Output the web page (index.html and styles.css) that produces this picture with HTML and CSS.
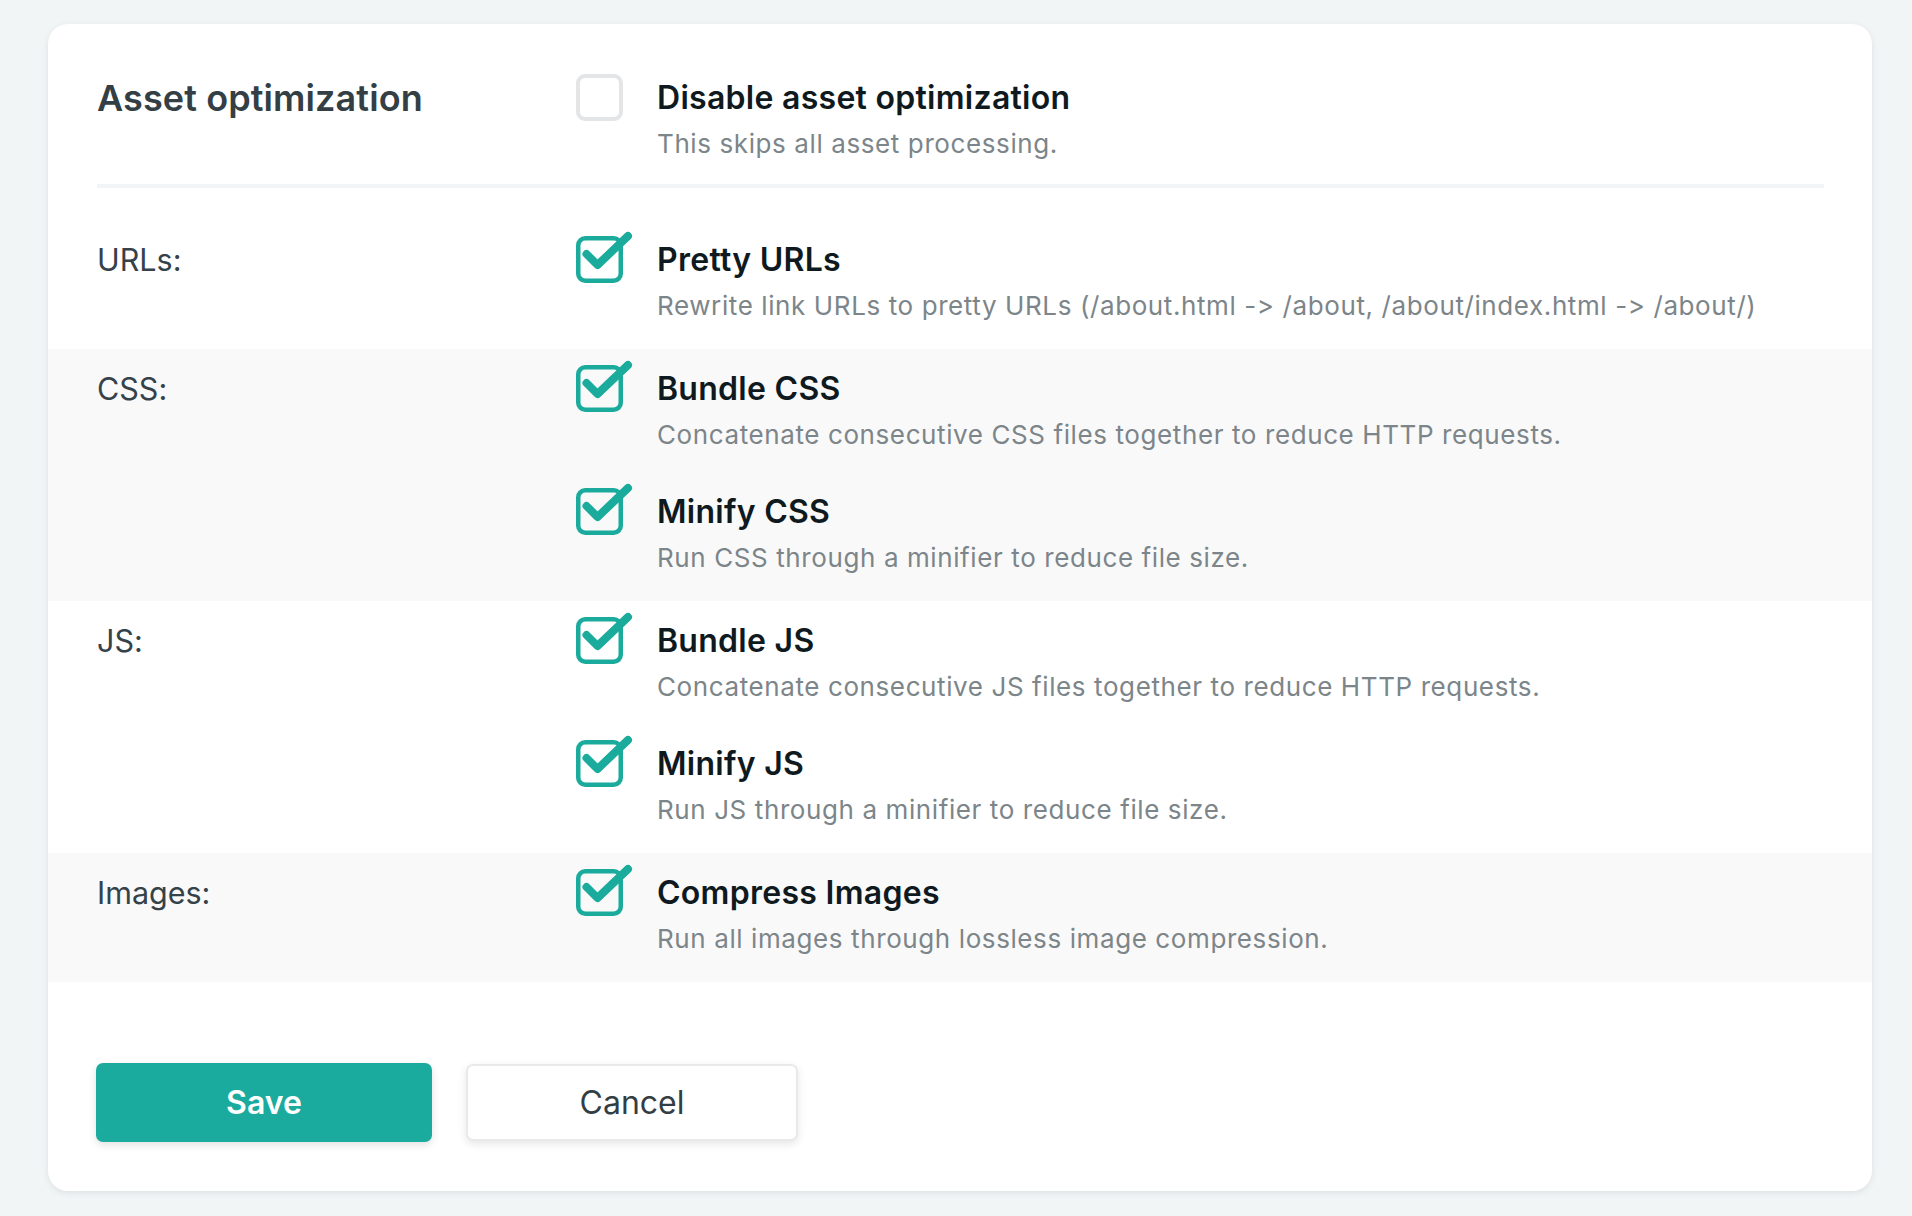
FILE: index.html
```html
<!DOCTYPE html>
<html lang="en">
<head>
<meta charset="utf-8">
<title>Asset optimization</title>
<link rel="stylesheet" href="styles.css">
</head>
<body>
<div class="card">
  <div class="header">
    <h2 class="title">Asset optimization</h2>
    <div class="option">
      <svg class="cb" viewBox="0 0 47 47" aria-hidden="true"><rect class="cb-off" x="2" y="2" width="43" height="43" rx="7"/></svg>
      <div class="opt-text">
        <div class="opt-label">Disable asset optimization</div>
        <div class="opt-desc">This skips all asset processing.</div>
      </div>
    </div>
  </div>
  <div class="divider"></div>

  <div class="row">
    <div class="row-label">URLs:</div>
    <div class="options">
      <div class="option">
        <svg class="cb" viewBox="0 0 47 47" aria-hidden="true"><rect class="cb-on" x="2.25" y="2.25" width="42.5" height="42.5" rx="7"/><path class="tick" d="M10.5 18 L21.5 29 L52 0"/></svg>
        <div class="opt-text">
          <div class="opt-label">Pretty URLs</div>
          <div class="opt-desc">Rewrite link URLs to pretty URLs (/about.html -&gt; /about, /about/index.html -&gt; /about/)</div>
        </div>
      </div>
    </div>
  </div>

  <div class="row alt">
    <div class="row-label">CSS:</div>
    <div class="options">
      <div class="option">
        <svg class="cb" viewBox="0 0 47 47" aria-hidden="true"><rect class="cb-on" x="2.25" y="2.25" width="42.5" height="42.5" rx="7"/><path class="tick" d="M10.5 18 L21.5 29 L52 0"/></svg>
        <div class="opt-text">
          <div class="opt-label">Bundle CSS</div>
          <div class="opt-desc">Concatenate consecutive CSS files together to reduce HTTP requests.</div>
        </div>
      </div>
      <div class="option">
        <svg class="cb" viewBox="0 0 47 47" aria-hidden="true"><rect class="cb-on" x="2.25" y="2.25" width="42.5" height="42.5" rx="7"/><path class="tick" d="M10.5 18 L21.5 29 L52 0"/></svg>
        <div class="opt-text">
          <div class="opt-label">Minify CSS</div>
          <div class="opt-desc">Run CSS through a minifier to reduce file size.</div>
        </div>
      </div>
    </div>
  </div>

  <div class="row">
    <div class="row-label">JS:</div>
    <div class="options">
      <div class="option">
        <svg class="cb" viewBox="0 0 47 47" aria-hidden="true"><rect class="cb-on" x="2.25" y="2.25" width="42.5" height="42.5" rx="7"/><path class="tick" d="M10.5 18 L21.5 29 L52 0"/></svg>
        <div class="opt-text">
          <div class="opt-label">Bundle JS</div>
          <div class="opt-desc">Concatenate consecutive JS files together to reduce HTTP requests.</div>
        </div>
      </div>
      <div class="option">
        <svg class="cb" viewBox="0 0 47 47" aria-hidden="true"><rect class="cb-on" x="2.25" y="2.25" width="42.5" height="42.5" rx="7"/><path class="tick" d="M10.5 18 L21.5 29 L52 0"/></svg>
        <div class="opt-text">
          <div class="opt-label">Minify JS</div>
          <div class="opt-desc">Run JS through a minifier to reduce file size.</div>
        </div>
      </div>
    </div>
  </div>

  <div class="row alt">
    <div class="row-label">Images:</div>
    <div class="options">
      <div class="option">
        <svg class="cb" viewBox="0 0 47 47" aria-hidden="true"><rect class="cb-on" x="2.25" y="2.25" width="42.5" height="42.5" rx="7"/><path class="tick" d="M10.5 18 L21.5 29 L52 0"/></svg>
        <div class="opt-text">
          <div class="opt-label">Compress Images</div>
          <div class="opt-desc">Run all images through lossless image compression.</div>
        </div>
      </div>
    </div>
  </div>

  <div class="actions">
    <button class="btn btn-primary" type="button">Save</button>
    <button class="btn btn-default" type="button">Cancel</button>
  </div>
</div>
</body>
</html>
```

FILE: styles.css
```css
* { box-sizing: border-box; }

html, body {
  margin: 0;
  background: #f2f5f6;
}

body {
  padding: 24px 40px 24px 48px;
  font-family: Inter, "Noto Sans", "Liberation Sans", sans-serif;
  font-variant-ligatures: none;
  font-feature-settings: "calt" 0, "liga" 0;
  -webkit-font-smoothing: antialiased;
}

.card {
  background: #ffffff;
  border-radius: 20px;
  box-shadow: 0 2px 6px rgba(40, 60, 70, 0.10);
  padding: 50px 0 49px;
  overflow: hidden;
}

.header {
  display: grid;
  grid-template-columns: 479px 1fr;
  padding: 0 48px 0 49px;
}

.title {
  margin: 0;
  font-size: 36px;
  line-height: 48px;
  font-weight: 600;
  color: #343f45;
  letter-spacing: 0.1px;
}

.divider {
  height: 4px;
  margin: 22px 48px 32px 49px;
  background: #f3f4f5;
}

.row {
  display: grid;
  grid-template-columns: 479px 1fr;
  padding: 16px 48px 25px 49px;
}

.row.alt {
  background: #f9f9f9;
}

.row-label {
  font-size: 30.5px;
  line-height: 48px;
  color: #35424a;
  font-weight: 400;
}

.options {
  display: flex;
  flex-direction: column;
  gap: 35px;
}

.option {
  display: flex;
  align-items: flex-start;
}

.cb {
  flex: none;
  width: 47px;
  height: 47px;
  margin-right: 34px;
  overflow: visible;
}

.cb-off {
  fill: #ffffff;
  stroke: #e4e5e6;
  stroke-width: 4;
}

.cb-on {
  fill: none;
  stroke: #1aab9c;
  stroke-width: 4.5;
}

.tick {
  fill: none;
  stroke: #1aab9c;
  stroke-width: 8;
  stroke-linecap: round;
  stroke-linejoin: round;
}

.opt-label {
  font-size: 32px;
  line-height: 48px;
  font-weight: 600;
  color: #0f1a20;
  letter-spacing: 0.28px;
}

.opt-desc {
  margin-top: 3px;
  font-size: 26px;
  line-height: 37px;
  color: #7c8589;
  letter-spacing: 0.6px;
}

.actions {
  display: flex;
  align-items: center;
  gap: 34px;
  padding: 81px 48px 0 48px;
}

.btn {
  font-family: inherit;
  font-size: 32px;
  border-radius: 7px;
  cursor: pointer;
}

.btn-primary {
  width: 336px;
  height: 79px;
  border: none;
  background: #1aab9e;
  color: #ffffff;
  font-weight: 600;
  box-shadow: 0 3px 8px rgba(0, 0, 0, 0.12);
}

.btn-default {
  width: 332px;
  height: 77px;
  border: 2px solid #e8e9ea;
  background: #ffffff;
  color: #333e44;
  font-weight: 400;
  box-shadow: 0 3px 8px rgba(0, 0, 0, 0.10);
}
```
